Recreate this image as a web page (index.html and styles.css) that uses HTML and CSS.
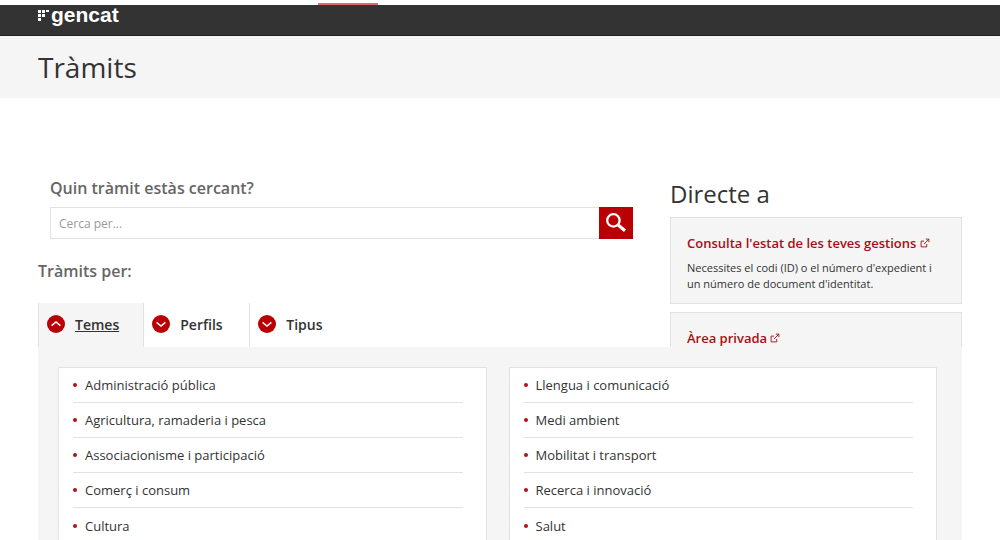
FILE: index.html
```html
<!DOCTYPE html>
<html lang="ca">
<head>
<meta charset="utf-8">
<meta name="viewport" content="width=device-width, initial-scale=1">
<title>Tràmits</title>
<link rel="stylesheet" href="styles.css">
</head>
<body>
<svg class="defs" width="0" height="0" aria-hidden="true">
  <symbol id="external" viewBox="0 0 10 10">
    <path d="M4 3.1H1.1v5.8h5.6V6M5.8 1.1h3.1v3.1M8.8 1.2 4 6" fill="none" stroke="currentColor" stroke-width="0.9"/>
  </symbol>
  <symbol id="down" viewBox="0 0 18 18">
    <circle cx="9" cy="9" r="9" fill="#b90005"/>
    <path d="m4.6 7.4 4.4 3.6 4.4-3.6" fill="none" stroke="#fff" stroke-width="1.5"/>
  </symbol>
  <symbol id="up" viewBox="0 0 18 18">
    <circle cx="9" cy="9" r="9" fill="#b90005"/>
    <path d="m4.6 10.6 4.4-3.6 4.4 3.6" fill="none" stroke="#fff" stroke-width="1.5"/>
  </symbol>
</svg>

<div class="strip"><span class="strip-mark"></span></div>
<header class="topbar">
  <a class="logo" href="#">
    <svg class="logo-dots" viewBox="0 0 12 12" aria-hidden="true">
      <path d="M0 0h3v3H0zM4 0h3v3H4zM8 0h3v2H8zM0 4h3v3H0zM4 4h3v3H4zM0 8h3v3H0z" fill="#fff"/>
    </svg>
    <span>gencat</span>
  </a>
</header>
<div class="title-band"><h1>Tràmits</h1></div>

<div class="page">
  <div class="intro">
    <main class="finder">
      <form class="search">
        <label for="q">Quin tràmit estàs cercant?</label>
        <div class="search-row">
          <input id="q" type="text" placeholder="Cerca per...">
          <button type="button" aria-label="Cerca">
            <svg viewBox="0 0 20 20" aria-hidden="true">
              <circle cx="7.4" cy="7.4" r="6.2" fill="none" stroke="#fff" stroke-width="2.3"/>
              <path d="m11.6 11.6 7.4 6.2" stroke="#fff" stroke-width="3.2"/>
            </svg>
          </button>
        </div>
      </form>
      <h2 class="by">Tràmits per:</h2>
      <nav class="tabs">
        <button type="button" class="tab active"><svg><use href="#up"/></svg><span>Temes</span></button>
        <button type="button" class="tab"><svg><use href="#down"/></svg><span>Perfils</span></button>
        <button type="button" class="tab"><svg><use href="#down"/></svg><span>Tipus</span></button>
      </nav>
    </main>
    <aside class="direct">
      <h2>Directe a</h2>
      <section class="card">
        <a href="#">Consulta l'estat de les teves gestions <svg><use href="#external"/></svg></a>
        <p>Necessites el codi (ID) o el número d'expedient i un número de document d'identitat.</p>
      </section>
      <section class="card open">
        <a href="#">Àrea privada <svg><use href="#external"/></svg></a>
      </section>
    </aside>
  </div>

  <section class="topics">
    <ul>
      <li><a href="#">Administració pública</a></li>
      <li><a href="#">Agricultura, ramaderia i pesca</a></li>
      <li><a href="#">Associacionisme i participació</a></li>
      <li><a href="#">Comerç i consum</a></li>
      <li><a href="#">Cultura</a></li>
    </ul>
    <ul>
      <li><a href="#">Llengua i comunicació</a></li>
      <li><a href="#">Medi ambient</a></li>
      <li><a href="#">Mobilitat i transport</a></li>
      <li><a href="#">Recerca i innovació</a></li>
      <li><a href="#">Salut</a></li>
    </ul>
  </section>
</div>
</body>
</html>
```
FILE: styles.css
```css
* { box-sizing: border-box; }
body { margin: 0; background: #fff; color: #333; font-family: "Open Sans", "Noto Sans", sans-serif; font-size: 13px; }
h1, h2, p, ul { margin: 0; padding: 0; }
a { color: inherit; text-decoration: none; }
button { font: inherit; color: inherit; border: 0; cursor: pointer; }
.defs { display: block; height: 0; }

.strip { display: flex; align-items: flex-end; height: 5px; padding-left: 318px; }
.strip-mark { width: 60px; height: 2px; background: #e0696a; }
.topbar { height: 31px; padding: 0 38px; background: #333; border-bottom: 1px solid #222; }
.logo { display: flex; gap: 1px; color: #fff; font: bold 21px/20px "Liberation Sans", Arial, sans-serif; }
.logo-dots { width: 12px; height: 12px; margin-top: 5px; }
.title-band { padding: 11px 38px; background: #f5f5f5; }
h1 { font-size: 28px; line-height: 40px; font-weight: 400; }

.page { padding: 80px 38px 0; }
.intro { display: flex; gap: 37px; }
.finder { flex: 1; display: flex; flex-direction: column; }
.search { padding-left: 12px; }
.search label { display: block; color: #666; font-size: 16px; line-height: 20px; font-weight: 600; margin-bottom: 9px; }
.search-row { display: flex; }
.search input { flex: 1; min-width: 0; height: 32px; padding: 0 8px; border: 1px solid #e2e2e2; border-right: 0; font: inherit; font-size: 12px; }
.search input::placeholder { color: #999; }
.search button { display: grid; place-items: center; width: 34px; height: 32px; padding: 0; background: #b90005; }
.search button svg { width: 20px; height: 20px; }
.by { margin: 22px 0; color: #666; font-size: 16px; line-height: 20px; font-weight: 600; }
.tabs { display: flex; }
.tab { display: flex; align-items: center; gap: 10px; min-width: 106px; height: 44px; padding: 0 24px 2px 8px; background: #fff; border-right: 1px solid #e2e2e2; font-size: 14px; font-weight: 600; }
.tab:last-child { border-right: 0; }
.tab.active { background: #f5f5f5; border-left: 1px solid #e2e2e2; }
.tab.active span { text-decoration: underline; }
.tab svg { width: 18px; height: 18px; }

.direct { flex: 0 0 292px; display: flex; flex-direction: column; }
.direct h2 { font-size: 24px; line-height: 32px; font-weight: 400; margin-bottom: 7px; }
.card { padding: 16px 16px 11px; background: #f5f5f5; border: 1px solid #e2e2e2; font-size: 11px; line-height: 16px; margin-bottom: 8px; }
.card a { display: block; color: #a90d12; font-size: 13px; line-height: 18px; font-weight: 600; }
.card a svg { width: 10px; height: 10px; }
.card p { margin-top: 8px; }
.card.open { flex: 1; margin-bottom: 0; padding-bottom: 0; border-bottom: 0; }

.topics { display: grid; grid-template-columns: 1fr 1fr; gap: 22px; padding: 20px 25px 0 20px; background: #f5f5f5; }
.topics ul { list-style: none; padding: 0 23px 0 14px; background: #fff; border: 1px solid #e2e2e2; border-bottom: 0; }
.topics li { display: flex; align-items: center; gap: 8px; height: 35px; border-bottom: 1px solid #e2e2e2; }
.topics li::before { content: ""; width: 4px; height: 4px; border-radius: 2px; background: #b0101c; }
.topics li:last-child { border-bottom: 0; }
```
